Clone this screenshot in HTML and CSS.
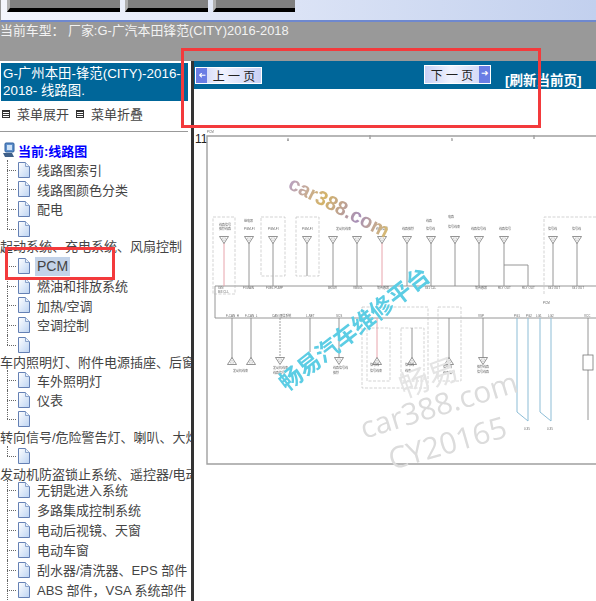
FILE: index.html
```html
<!DOCTYPE html>
<html lang="zh-CN">
<head>
    <meta charset="UTF-8">
    <meta name="viewport" content="width=device-width, initial-scale=1.0">
    <title>线路图</title>
    <link rel="stylesheet" href="styles.css">
</head>
<body>
    <!-- Icon shapes -->
    <svg class="defs" width="0" height="0">
        <defs>
            <linearGradient id="docFill" x1="0" y1="0" x2="1" y2="1">
                <stop offset="0" stop-color="#ffffff"/>
                <stop offset="1" stop-color="#bcd3f2"/>
            </linearGradient>
            <linearGradient id="goldFill" x1="0" y1="0" x2="1" y2="0">
                <stop offset="0" stop-color="#b9a2c0"/>
                <stop offset=".35" stop-color="#d4b46a"/>
                <stop offset=".7" stop-color="#a890b8"/>
                <stop offset="1" stop-color="#d8bb70"/>
            </linearGradient>
            <symbol id="doc" viewBox="0 0 13 16">
                <path d="M1.5 .5H8.5L12.5 4.5V15.5H1.5Z" fill="url(#docFill)" stroke="#6480b4"/>
                <path d="M8.5 .5V4.5H12.5" fill="#e8f0fb" stroke="#8aa3cb"/>
            </symbol>
            <symbol id="ground" viewBox="0 0 10 8">
                <path d="M.5 .5H9.5L5 7.5Z" fill="#fff" stroke="#666" stroke-width=".7"/>
                <path d="M3 2H7L5 5Z" fill="none" stroke="#999" stroke-width=".4"/>
            </symbol>
        </defs>
    </svg>

    <!-- Top buttons -->
    <div class="topbar">
        <div class="top-btn top-btn-a"><span>线路图查询</span></div>
        <div class="top-btn top-btn-b"><span>帮助</span></div>
        <div class="top-btn top-btn-c"><span>退出</span></div>
    </div>

    <div class="model-bar">当前车型： 厂家:G-广汽本田锋范(CITY)2016-2018</div>

    <div class="main">
        <!-- Left menu -->
        <div class="sidebar">
            <div class="side-title">G-广州本田-锋范(CITY)-2016-<br>2018- 线路图.</div>
            <div class="menu-links">
                <span class="box-icon"></span><span class="menu-link">菜单展开</span>
                <span class="box-icon"></span><span class="menu-link">菜单折叠</span>
            </div>
            <div class="tree">
                <div class="tree-root">
                    <svg class="pc-icon" width="14" height="16" viewBox="0 0 14 16">
                        <rect x="3" y="1" width="9" height="9" rx="1" fill="#5f8fca" stroke="#2d5f9e"/>
                        <rect x="5" y="3" width="5" height="5" fill="#cfe3f8"/>
                        <path d="M1 11H10L12 15H3Z" fill="#3e5f88"/>
                    </svg>
                    当前:线路图
                </div>
                <div class="tree-item"><svg class="doc-icon"><use href="#doc"/></svg><span>线路图索引</span></div>
                <div class="tree-item"><svg class="doc-icon"><use href="#doc"/></svg><span>线路图颜色分类</span></div>
                <div class="tree-item"><svg class="doc-icon"><use href="#doc"/></svg><span>配电</span></div>
                <div class="tree-item last"><svg class="doc-icon"><use href="#doc"/></svg></div>
                <div class="tree-cat tall">起动系统、充电系统、风扇控制</div>
                <div class="tree-item"><svg class="doc-icon"><use href="#doc"/></svg><span class="selected">PCM</span></div>
                <div class="tree-item"><svg class="doc-icon"><use href="#doc"/></svg><span>燃油和排放系统</span></div>
                <div class="tree-item"><svg class="doc-icon"><use href="#doc"/></svg><span>加热/空调</span></div>
                <div class="tree-item"><svg class="doc-icon"><use href="#doc"/></svg><span>空调控制</span></div>
                <div class="tree-item last"><svg class="doc-icon"><use href="#doc"/></svg></div>
                <div class="tree-cat short">车内照明灯、附件电源插座、后窗除雾器</div>
                <div class="tree-item"><svg class="doc-icon"><use href="#doc"/></svg><span>车外照明灯</span></div>
                <div class="tree-item"><svg class="doc-icon"><use href="#doc"/></svg><span>仪表</span></div>
                <div class="tree-item last"><svg class="doc-icon"><use href="#doc"/></svg></div>
                <div class="tree-cat">转向信号/危险警告灯、喇叭、大灯清洗器</div>
                <div class="tree-item last"><svg class="doc-icon"><use href="#doc"/></svg></div>
                <div class="tree-cat tight">发动机防盗锁止系统、遥控器/电动门锁</div>
                <div class="tree-item wide"><svg class="doc-icon"><use href="#doc"/></svg><span>无钥匙进入系统</span></div>
                <div class="tree-item wide"><svg class="doc-icon"><use href="#doc"/></svg><span>多路集成控制系统</span></div>
                <div class="tree-item wide"><svg class="doc-icon"><use href="#doc"/></svg><span>电动后视镜、天窗</span></div>
                <div class="tree-item wide"><svg class="doc-icon"><use href="#doc"/></svg><span>电动车窗</span></div>
                <div class="tree-item wide"><svg class="doc-icon"><use href="#doc"/></svg><span>刮水器/清洗器、EPS 部件</span></div>
                <div class="tree-item wide"><svg class="doc-icon"><use href="#doc"/></svg><span>ABS 部件，VSA 系统部件</span></div>
            </div>
        </div>

        <!-- Diagram -->
        <div class="content">
            <div class="page-bar">
                <div class="page-btn page-btn-prev"><span class="arrow">&#10140;</span><span class="page-label">上 一 页</span></div>
                <div class="page-btn page-btn-next"><span class="page-label">下 一 页</span><span class="arrow">&#10140;</span></div>
                <div class="refresh">[刷新当前页]</div>
            </div>
            <div class="page-num">11</div>
            <!-- viewBox uses the coordinates of the window -->
            <svg class="diagram" width="401" height="340" viewBox="195 128 401 340">
                <g class="frame">
                    <path d="M600 136H207V464H600"/>
                    <path d="M370 135V139M534 135V139"/>
                </g>
                <g class="tiny">
                    <text x="207" y="133">PCM</text>
                    <text x="287" y="141">A</text>
                    <text x="451" y="141">B</text>
                </g>

                <!-- buses -->
                <path class="wire" d="M215 286H596M215 286V318M215 318H596"/>

                <!-- top wires -->
                <path class="wire" d="M249 243V286M273 243V286M307 243V276M333 243V286M357 243V286M407 243V286M431 243V286M455 243V286M479 243V286M504 243V286M553 243V286M577 243V286"/>
                <path class="wire-pink" d="M224 243V286M382 243V286M377 318V358"/>
                <path class="wire" d="M504 265H528V286"/>
                <use href="#ground" x="219" y="236" width="10" height="8"/>
                <use href="#ground" x="244" y="236" width="10" height="8"/>
                <use href="#ground" x="268" y="236" width="10" height="8"/>
                <use href="#ground" x="302" y="236" width="10" height="8"/>
                <use href="#ground" x="328" y="236" width="10" height="8"/>
                <use href="#ground" x="352" y="236" width="10" height="8"/>
                <use href="#ground" x="377" y="236" width="10" height="8"/>
                <use href="#ground" x="402" y="236" width="10" height="8"/>
                <use href="#ground" x="426" y="236" width="10" height="8"/>
                <use href="#ground" x="450" y="236" width="10" height="8"/>
                <use href="#ground" x="474" y="236" width="10" height="8"/>
                <use href="#ground" x="499" y="236" width="10" height="8"/>
                <use href="#ground" x="548" y="236" width="10" height="8"/>
                <use href="#ground" x="572" y="236" width="10" height="8"/>

                <!-- dashed boxes -->
                <g class="dashed">
                    <rect x="213" y="217" width="22" height="77"/>
                    <rect x="261" y="217" width="24" height="59"/>
                    <rect x="296" y="217" width="23" height="59"/>
                    <path d="M596 217H544V294"/>
                    <rect x="362" y="307" width="66" height="81"/>
                    <rect x="367" y="328" width="23" height="53"/>
                    <rect x="401" y="328" width="23" height="53"/>
                    <rect x="438" y="307" width="23" height="74"/>
                </g>

                <!-- lower wires -->
                <path class="wire" d="M232 318V360M251 318V360M310 318V352M339 318V358M412 328V358M449 318V360M483 318V358M588 318V420"/>
                <path class="wire-dash" d="M280 318V358"/>
                <path class="wire-blue" d="M517 318V412L528 421V318M540 318V412L551 421V318"/>
                <rect x="583" y="355" width="10" height="15" fill="#fff" stroke="#777" stroke-width=".8"/>
                <use href="#ground" x="275" y="357" width="10" height="8"/>
                <use href="#ground" x="334" y="357" width="10" height="8"/>
                <use href="#ground" x="478" y="357" width="10" height="8"/>
                <g transform="translate(0 725) scale(1 -1)">
                    <use href="#ground" x="227" y="360" width="10" height="8"/>
                    <use href="#ground" x="246" y="360" width="10" height="8"/>
                    <use href="#ground" x="372" y="360" width="10" height="8"/>
                    <use href="#ground" x="407" y="360" width="10" height="8"/>
                    <use href="#ground" x="444" y="360" width="10" height="8"/>
                </g>

                <!-- tiny labels -->
                <g class="tiny">
                    <text x="219" y="226">线路信号</text><text x="219" y="230">搭铁线路</text>
                    <text x="244" y="222">继电器</text><text x="244" y="230">PGM-FI</text>
                    <text x="268" y="230">PGM-FI</text>
                    <text x="302" y="230">PGM-FI</text>
                    <text x="336" y="230">发动机线束</text>
                    <text x="376" y="230">线路信号</text>
                    <text x="402" y="230">线路搭铁</text>
                    <text x="426" y="222">线路</text><text x="426" y="230">信号线</text>
                    <text x="448" y="218">电路</text><text x="448" y="228">信号线束</text>
                    <text x="471" y="230">线路信号线</text>
                    <text x="499" y="230">线路信号</text>
                    <text x="548" y="230">信号线</text>
                    <text x="572" y="230">信号线</text>
                    <text x="218" y="289">IGN</text><text x="218" y="293">B/3 CLL</text>
                    <text x="243" y="289">FI MAIN</text>
                    <text x="266" y="289">FUEL PUMP</text>
                    <text x="328" y="289">BKSW</text>
                    <text x="353" y="289">VBSOL</text>
                    <text x="377" y="289">氧传感器</text>
                    <text x="425" y="289">IG1 CLL</text>
                    <text x="475" y="289">氧传感器</text>
                    <text x="498" y="289">RLY OUT</text>
                    <text x="522" y="289">RLY OUT</text>
                    <text x="548" y="289">IG1 OUT</text>
                    <text x="572" y="289">IG1 OUT</text>
                    <text x="226" y="317">F-CAN_H</text>
                    <text x="245" y="317">F-CAN_L</text>
                    <text x="272" y="317">CAN 通信系统</text>
                    <text x="306" y="317">L-NET</text>
                    <text x="336" y="317">SCS</text>
                    <text x="478" y="317">VSP</text>
                    <text x="514" y="317">PG1</text><text x="526" y="317">PG2</text>
                    <text x="536" y="317">LG1</text><text x="548" y="317">LG2</text>
                    <text x="584" y="317">VCC</text>
                    <text x="543" y="304">PCM</text>
                    <text x="233" y="372">发动机线束</text>
                    <text x="273" y="369">发动机线束</text><text x="273" y="374">线路信号</text>
                    <text x="333" y="369">线路信号线</text><text x="333" y="374">搭铁</text>
                    <text x="370" y="366">信号线</text><text x="370" y="372">信号线束</text>
                    <text x="405" y="366">信号线</text><text x="405" y="372">线束</text>
                    <text x="443" y="368">信号线</text><text x="443" y="374">线束信号</text>
                    <text x="477" y="368">搭铁线路</text><text x="477" y="373">信号线路</text>
                    <text x="524" y="430">0.35</text><text x="547" y="430">0.35</text>
                </g>

                <!-- watermarks -->
                <text class="mark-gold" x="287" y="188" transform="rotate(27 287 188)">car388.com</text>
                <text class="mark-cyan" x="287" y="392" transform="rotate(-38 287 392)">畅易汽车维修平台</text>
                <text class="mark-grey-cn" x="404" y="398" transform="rotate(-20 404 398)">畅易</text>
                <text class="mark-grey" x="364" y="439" transform="rotate(-17 364 439)">car388.com</text>
                <text class="mark-grey" x="392" y="470" transform="rotate(-16 392 470)">CY20165</text>
            </svg>
        </div>
    </div>

    <!-- Red marks drawn over the screenshot -->
    <div class="mark-box mark-box-page"></div>
    <div class="mark-box mark-box-pcm"></div>
</body>
</html>
```

FILE: styles.css
```css
body {
    margin: 0;
    width: 596px;
    height: 601px;
    overflow: hidden;
    position: relative;
    background: #fff;
    font-family: "Liberation Sans", "Noto Sans CJK SC", sans-serif;
}

.defs {
    display: block;
    height: 0;
}

/* Top buttons */
.topbar {
    height: 22px;
    box-sizing: border-box;
    padding-left: 6px;
    display: flex;
    gap: 5px;
    background: linear-gradient(to right, #f4f6fd, #c2d0ee);
    border-left: 1px solid #999;
    border-bottom: 2px solid #6e88cf;
}

.top-btn {
    height: 12px;
    box-sizing: border-box;
    background: #808080;
    border-left: 3px solid #b0b0b0;
    border-bottom: 4px solid #000;
    display: flex;
    align-items: flex-end;
    justify-content: center;
    overflow: hidden;
}

.top-btn span {
    color: #b5d0ff;
    font-size: 13px;
    font-weight: bold;
    line-height: 4px;
    white-space: nowrap;
    transform: translateY(-13px);
}

.top-btn-a { width: 113px; }
.top-btn-b { width: 83px; }
.top-btn-c { width: 82px; }

.model-bar {
    height: 39px;
    background: #999;
    color: #f2f2f2;
    font-size: 12.9px;
    line-height: 17px;
    white-space: nowrap;
}

.main {
    display: flex;
    height: 540px;
}

/* Left menu */
.sidebar {
    width: 194px;
    flex: none;
    box-sizing: border-box;
    padding-top: 2px;
    overflow: hidden;
    border-right: 3px solid #333;
}

.side-title {
    width: 183px;
    height: 34px;
    margin-left: 1px;
    padding: 2px;
    background: #006699;
    color: #fff;
    font-size: 13.4px;
    line-height: 17px;
    white-space: nowrap;
}

.menu-links {
    height: 31px;
    box-sizing: border-box;
    padding: 6px 0 0 2px;
    margin-right: 3px;
    display: flex;
    align-items: flex-start;
    font-size: 13px;
    color: #444;
    border-bottom: 1px solid #999;
}

.menu-link {
    margin: 0 7px;
    line-height: 16px;
}

.box-icon {
    width: 6px;
    height: 6px;
    margin-top: 3px;
    flex: none;
    border: 1px solid #333;
    background: repeating-linear-gradient(to bottom, #333 0, #333 1px, #fff 1px, #fff 2px);
}

.tree {
    padding-top: 8px;
    color: #444;
    font-size: 13px;
    white-space: nowrap;
}

.tree-root {
    height: 20px;
    display: flex;
    align-items: center;
    gap: 2px;
    padding-left: 2px;
    color: #0000ff;
    font-size: 13px;
    font-weight: bold;
}

.pc-icon {
    flex: none;
}

.tree-item {
    position: relative;
    height: 19.6px;
    margin-left: 7px;
    padding-left: 10px;
    display: flex;
    align-items: center;
}

.tree-item.wide {
    height: 20px;
}

/* dotted tree lines */
.tree-item::before {
    content: "";
    position: absolute;
    left: 0;
    top: 0;
    height: 100%;
    border-left: 1px dotted #666;
}

.tree-item::after {
    content: "";
    position: absolute;
    left: 0;
    top: 50%;
    width: 9px;
    border-top: 1px dotted #666;
}

.tree-item.last::before {
    height: 50%;
}

.doc-icon {
    width: 13px;
    height: 16px;
    flex: none;
}

.tree-item span {
    margin-left: 7px;
}

.tree-item .selected {
    margin-left: 5px;
    padding: 2px;
    font-size: 14px;
    line-height: 15px;
    background: #c3d3e9;
}

.tree-cat {
    height: 17px;
    line-height: 17px;
}

.tree-cat.tall { height: 18px; }
.tree-cat.short { height: 16px; }
.tree-cat.tight { height: 14px; }

/* Diagram */
.content {
    flex: 1;
    position: relative;
    overflow: hidden;
}

.page-bar {
    height: 28px;
    display: flex;
    align-items: flex-start;
    background: #006699;
}

.page-btn {
    width: 67px;
    height: 17px;
    box-sizing: border-box;
    display: flex;
    align-items: center;
    border: 1px solid #fff;
    background: linear-gradient(to right, #c8cff5, #f1f3fe 40%, #c9d0f4);
    color: #222;
    font-size: 12px;
}

.page-btn-prev {
    margin: 6px 0 0 1px;
}

.page-btn-next {
    height: 19px;
    margin: 4px 0 0 162px;
}

.page-label {
    flex: 1;
    text-align: center;
}

.arrow {
    width: 11px;
    align-self: stretch;
    flex: none;
    background: #6a7de4;
    color: #fff;
    font-size: 9px;
    line-height: 15px;
    text-align: center;
}

.page-btn-prev .arrow {
    transform: scaleX(-1);
}

.refresh {
    margin: 12px 0 0 14px;
    color: #fff;
    font-size: 13.5px;
    font-weight: bold;
    line-height: 16px;
    white-space: nowrap;
}

.page-num {
    position: absolute;
    left: 1px;
    top: 71px;
    font-size: 12px;
    line-height: 14px;
    color: #222;
}

.diagram {
    display: block;
    margin: 39px 0 0 1px;
    font-family: "Liberation Sans", "Noto Sans CJK SC", sans-serif;
    filter: blur(.35px);
}

.frame path {
    fill: none;
    stroke: #a0a0a0;
    stroke-width: 1.4;
}

.wire {
    fill: none;
    stroke: #8a8a8a;
    stroke-width: .9;
}

.wire-pink {
    fill: none;
    stroke: #e8a4ac;
    stroke-width: 1;
}

.wire-blue {
    fill: none;
    stroke: #8dbdd6;
    stroke-width: 1;
}

.wire-dash {
    fill: none;
    stroke: #8a8a8a;
    stroke-width: .8;
    stroke-dasharray: 2 1;
}

.dashed rect, .dashed path {
    fill: none;
    stroke: #b5b5b5;
    stroke-width: .6;
    stroke-dasharray: 3 1.5;
}

.tiny text {
    font-size: 3px;
    fill: #666;
}

.mark-gold {
    font-size: 20px;
    font-weight: bold;
    fill: url(#goldFill);
}

.mark-cyan {
    font-size: 23px;
    font-weight: bold;
    fill: #5ccde4;
}

.mark-grey {
    font-family: "Open Sans", sans-serif;
    font-size: 30px;
    fill: #dcdcdc;
}

.mark-grey-cn {
    font-size: 30px;
    fill: #e4e4e4;
}

/* Red marks */
.mark-box {
    position: absolute;
    box-sizing: border-box;
    border: 3px solid #f33a3c;
}

.mark-box-page {
    left: 181px;
    top: 48px;
    width: 360px;
    height: 80px;
}

.mark-box-pcm {
    left: 5px;
    top: 247px;
    width: 110px;
    height: 33px;
}
```
